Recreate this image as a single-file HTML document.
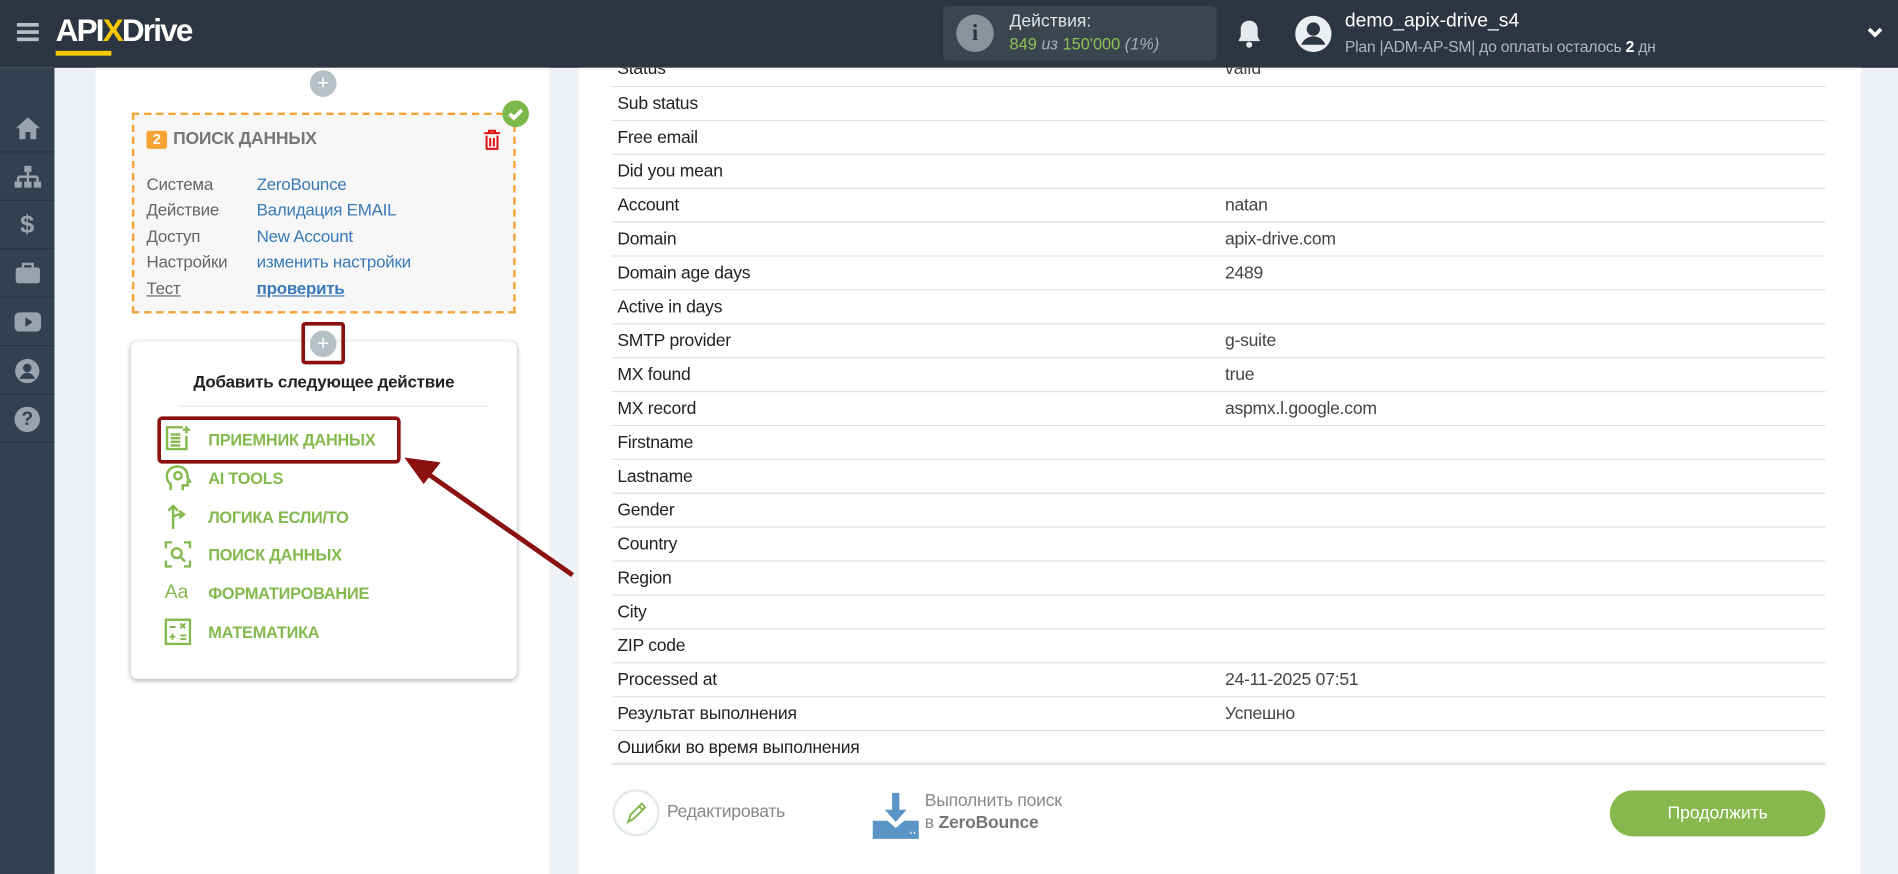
<!DOCTYPE html>
<html><head><meta charset="utf-8"><style>
*{box-sizing:border-box;margin:0;padding:0}
html,body{width:1898px;height:874px;overflow:hidden;background:#eef1f6}
#w{position:absolute;left:0;top:0;width:1568px;height:722px;transform:scale(1.21046);transform-origin:0 0;font-family:"Liberation Sans","Noto Sans CJK SC",sans-serif;background:#eef2f7}
.abs{position:absolute}
#hdr{left:0;top:0;width:1568px;height:56px;background:#2c3642}
#side{left:0;top:56px;width:45px;height:666px;background:#334050}
.si{position:absolute;left:0;width:45px;height:39px;border-bottom:1px solid #283340;display:flex;align-items:center;justify-content:center}
#lp{left:79px;top:56px;width:375px;height:666px;background:#fff}
#rp{left:478px;top:56px;width:1059px;height:666px;background:#fff}
.row{position:absolute;left:506px;width:1002px;height:28px;border-bottom:1px solid #e0e0e0;font-size:14.5px;letter-spacing:-0.2px;color:#222}
.row span{position:absolute;top:6px}
.row .v{left:506px;color:#444}
.plus{position:absolute;width:22px;height:22px;border-radius:50%;background:#b5c1c6;color:#fff;font-size:17px;line-height:21px;text-align:center}
.kv{position:absolute;font-size:14px;letter-spacing:-0.2px}
.k{left:121px;color:#666}
.vv{left:212px;color:#3a7ab8}
.mi{position:absolute;left:172px;font-size:13.5px;letter-spacing:-0.2px;font-weight:bold;color:#84b94e}
</style></head><body><div id="w">
<div id="hdr" class="abs">
 <div class="abs" style="left:14px;top:19px;width:18px;height:3px;background:#b8bec6;box-shadow:0 6px 0 #b8bec6,0 12px 0 #b8bec6"></div>
 <div class="abs" style="left:46px;top:10px;font-size:26px;font-weight:bold;color:#fff;letter-spacing:-1.5px">API<span style="color:#f5c800">X</span>Drive</div>
 <div class="abs" style="left:46px;top:42px;width:46px;height:4px;background:#f5c800"></div>
 <div class="abs" style="left:779px;top:5px;width:226px;height:45px;background:#3a4550;border-radius:4px"></div>
 <div class="abs" style="left:790px;top:12px;width:31px;height:31px;border-radius:50%;background:#8a939c;color:#2c3642;font-weight:bold;font-size:19px;text-align:center;line-height:31px;font-family:'Liberation Serif',serif">i</div>
 <div class="abs" style="left:834px;top:10px;font-size:14.5px;color:#dfe3e7">Действия:</div>
 <div class="abs" style="left:834px;top:29px;font-size:13.5px;color:#8cc152">849 <i style="color:#aab">из</i> 150'000 <i style="color:#aab">(1%)</i></div>
 <svg class="abs" style="left:1021px;top:15px" width="22" height="26" viewBox="0 0 22 26"><path d="M11 2c-4 0-7 3-7 7v6l-2 4h18l-2-4V9c0-4-3-7-7-7z" fill="#e6e9ec"/><circle cx="11" cy="22" r="2.5" fill="#e6e9ec"/></svg>
 <svg class="abs" style="left:1069px;top:12px" width="32" height="32" viewBox="0 0 32 32"><circle cx="16" cy="16" r="15" fill="#eceff2"/><circle cx="16" cy="12" r="5.5" fill="#2c3642"/><path d="M6 25c2-5 6-7 10-7s8 2 10 7" fill="#2c3642"/></svg>
 <div class="abs" style="left:1111px;top:9px;font-size:16px;color:#fff">demo_apix-drive_s4</div>
 <div class="abs" style="left:1111px;top:31px;font-size:13px;color:#aeb6bf;letter-spacing:-0.2px">Plan |ADM-AP-SM| до оплаты осталось <b style="color:#fff">2</b> дн</div>
 <svg class="abs" style="left:1542px;top:22px" width="14" height="10" viewBox="0 0 14 10"><path d="M2 2l5 5 5-5" stroke="#fff" stroke-width="3" fill="none"/></svg>
</div>
<div id="side" class="abs">
 <div class="si" style="top:31px"><svg width="22" height="20" viewBox="0 0 22 20"><path d="M11 1L1 10h3v9h5v-6h4v6h5v-9h3z" fill="#9aa3ad"/></svg></div>
 <div class="si" style="top:71px"><svg width="24" height="20" viewBox="0 0 24 20"><rect x="9" y="1" width="6" height="5" fill="#9aa3ad"/><path d="M12 6v4M4 10h16M4 10v4M12 10v4M20 10v4" stroke="#9aa3ad" stroke-width="2"/><rect x="1" y="14" width="6" height="5" fill="#9aa3ad"/><rect x="9" y="14" width="6" height="5" fill="#9aa3ad"/><rect x="17" y="14" width="6" height="5" fill="#9aa3ad"/></svg></div>
 <div class="si" style="top:111px;color:#9aa3ad;font-weight:bold;font-size:21px">$</div>
 <div class="si" style="top:151px"><svg width="22" height="18" viewBox="0 0 22 18"><rect x="1" y="4" width="20" height="13" rx="2" fill="#9aa3ad"/><rect x="7" y="1" width="8" height="4" fill="none" stroke="#9aa3ad" stroke-width="2"/></svg></div>
 <div class="si" style="top:191px"><svg width="22" height="16" viewBox="0 0 22 16"><rect x="0" y="0" width="22" height="16" rx="4" fill="#9aa3ad"/><path d="M9 4l6 4-6 4z" fill="#334050"/></svg></div>
 <div class="si" style="top:231px"><svg width="21" height="21" viewBox="0 0 21 21"><circle cx="10.5" cy="10.5" r="10" fill="#9aa3ad"/><circle cx="10.5" cy="8" r="3.5" fill="#334050"/><path d="M4 17c2-4 4-5 6.5-5s4.5 1 6.5 5" fill="#334050"/></svg></div>
 <div class="si" style="top:271px"><div style="width:21px;height:21px;border-radius:50%;background:#9aa3ad;color:#334050;font-weight:bold;font-size:16px;text-align:center;line-height:21px">?</div></div>
</div>
<div id="lp" class="abs"></div>
<div class="plus" style="left:256px;top:58px">+</div>
<div class="abs" style="left:109px;top:93px;width:317px;height:166px;background:#f7f7f7;border:2px dashed #f7a234"></div>
<div class="abs" style="left:415px;top:83px;width:22px;height:22px;border-radius:50%;background:#7cb94a"><svg width="22" height="22" viewBox="0 0 22 22"><path d="M6 11l3.5 3.5L16 8" stroke="#fff" stroke-width="3" fill="none"/></svg></div>
<div class="abs" style="left:121px;top:108px;width:17px;height:15px;background:#f7a234;color:#fff;font-size:12px;font-weight:bold;text-align:center;line-height:15px;border-radius:2px">2</div>
<div class="abs" style="left:143px;top:107px;font-size:14.5px;letter-spacing:-0.2px;font-weight:bold;color:#777">ПОИСК ДАННЫХ</div>
<svg class="abs" style="left:399px;top:107px" width="15" height="17" viewBox="0 0 15 17"><path d="M1 3h13M5 3V1h5v2M3 5v11h9V5M6 7v7M9 7v7" stroke="#d11" stroke-width="1.6" fill="none"/></svg>
<div class="kv k" style="top:144px">Система</div><div class="kv vv" style="top:144px">ZeroBounce</div>
<div class="kv k" style="top:165px">Действие</div><div class="kv vv" style="top:165px">Валидация EMAIL</div>
<div class="kv k" style="top:187px">Доступ</div><div class="kv vv" style="top:187px">New Account</div>
<div class="kv k" style="top:208px">Настройки</div><div class="kv vv" style="top:208px">изменить настройки</div>
<div class="kv k" style="top:230px;text-decoration:underline">Тест</div><div class="kv vv" style="top:230px;font-weight:bold;text-decoration:underline">проверить</div>
<div class="abs" style="left:108px;top:282px;width:319px;height:279px;background:#fff;border-radius:6px;box-shadow:0 1px 4px rgba(0,0,0,.35)"></div>
<div class="plus" style="left:256px;top:273px">+</div>
<div class="abs" style="left:249px;top:266px;width:36px;height:35px;border:3px solid #8b1010;border-radius:3px"></div>
<div class="abs" style="left:108px;top:307px;width:319px;text-align:center;font-size:14px;letter-spacing:-0.2px;font-weight:bold;color:#222">Добавить следующее действие</div>
<div class="abs" style="left:148px;top:335px;width:256px;height:1px;background:#e6e6e6"></div>
<div class="abs" style="left:130px;top:344px;width:201px;height:39px;border:3px solid #8b1010;border-radius:4px"></div>
<svg class="abs" style="left:136px;top:351px" width="22" height="22" viewBox="0 0 22 22"><path d="M15 2H2v18h16V9" stroke="#84b94e" stroke-width="2" fill="none"/><path d="M5 8h8M5 11h8M5 14h8M5 17h8M18 1v6M15 4h6" stroke="#84b94e" stroke-width="2"/></svg>
<div class="mi" style="top:356px">ПРИЕМНИК ДАННЫХ</div>
<svg class="abs" style="left:136px;top:383px" width="22" height="24" viewBox="0 0 22 24"><path d="M5 22v-5C1 14 1 8 4 5s9-4 13 0c2 2 2 5 2 7l2 3h-2v3h-4v4" stroke="#84b94e" stroke-width="2" fill="none"/><circle cx="11" cy="10" r="3" stroke="#84b94e" stroke-width="2" fill="none"/></svg>
<div class="mi" style="top:388px">AI TOOLS</div>
<svg class="abs" style="left:137px;top:416px" width="20" height="22" viewBox="0 0 20 22"><path d="M6 21V2M2 6l4-4 4 4M6 13c0-3 3-4 7-4M11 6l4 3-4 3" stroke="#84b94e" stroke-width="2" fill="none"/></svg>
<div class="mi" style="top:420px">ЛОГИКА ЕСЛИ/ТО</div>
<svg class="abs" style="left:136px;top:447px" width="22" height="22" viewBox="0 0 22 22"><path d="M1 6V1h5M16 1h5v5M21 16v5h-5M6 21H1v-5" stroke="#84b94e" stroke-width="2" fill="none"/><circle cx="10" cy="10" r="4" stroke="#84b94e" stroke-width="2" fill="none"/><path d="M13 13l4 4" stroke="#84b94e" stroke-width="2"/></svg>
<div class="mi" style="top:451px">ПОИСК ДАННЫХ</div>
<div class="abs" style="left:136px;top:481px;font-size:16px;color:#84b94e">Aa</div>
<div class="mi" style="top:483px">ФОРМАТИРОВАНИЕ</div>
<svg class="abs" style="left:136px;top:511px" width="22" height="22" viewBox="0 0 22 22"><rect x="1" y="1" width="20" height="20" stroke="#84b94e" stroke-width="2" fill="none"/><path d="M4 7h5M13 4l4 4M17 4l-4 4M4 15h5M6.5 12.5v5M13 14h5M13 17h5" stroke="#84b94e" stroke-width="1.6"/></svg>
<div class="mi" style="top:515px">МАТЕМАТИКА</div>
<svg class="abs" style="left:330px;top:375px" width="150" height="105" viewBox="0 0 150 105"><path d="M143 100L20 14" stroke="#8b1010" stroke-width="4"/><path d="M4 3l30 4-14 18z" fill="#8b1010"/></svg>
<div id="rp" class="abs"></div>
<div class="abs" style="left:506px;top:56px;width:1002px;height:15px;overflow:hidden"><div style="position:absolute;left:4px;top:-7px;font-size:14.5px;letter-spacing:-0.2px;color:#222">Status</div><div style="position:absolute;left:506px;top:-7px;font-size:14.5px;color:#444">valid</div></div>
<div class="abs" style="left:506px;top:71px;width:1002px;height:1px;background:#e0e0e0"></div>
<div class="row" style="top:72px"><span style="left:4px">Sub status</span></div>
<div class="row" style="top:100px"><span style="left:4px">Free email</span></div>
<div class="row" style="top:128px"><span style="left:4px">Did you mean</span></div>
<div class="row" style="top:156px"><span style="left:4px">Account</span><span class="v">natan</span></div>
<div class="row" style="top:184px"><span style="left:4px">Domain</span><span class="v">apix-drive.com</span></div>
<div class="row" style="top:212px"><span style="left:4px">Domain age days</span><span class="v">2489</span></div>
<div class="row" style="top:240px"><span style="left:4px">Active in days</span></div>
<div class="row" style="top:268px"><span style="left:4px">SMTP provider</span><span class="v">g-suite</span></div>
<div class="row" style="top:296px"><span style="left:4px">MX found</span><span class="v">true</span></div>
<div class="row" style="top:324px"><span style="left:4px">MX record</span><span class="v">aspmx.l.google.com</span></div>
<div class="row" style="top:352px"><span style="left:4px">Firstname</span></div>
<div class="row" style="top:380px"><span style="left:4px">Lastname</span></div>
<div class="row" style="top:408px"><span style="left:4px">Gender</span></div>
<div class="row" style="top:436px"><span style="left:4px">Country</span></div>
<div class="row" style="top:464px"><span style="left:4px">Region</span></div>
<div class="row" style="top:492px"><span style="left:4px">City</span></div>
<div class="row" style="top:520px"><span style="left:4px">ZIP code</span></div>
<div class="row" style="top:548px"><span style="left:4px">Processed at</span><span class="v">24-11-2025 07:51</span></div>
<div class="row" style="top:576px"><span style="left:4px">Результат выполнения</span><span class="v">Успешно</span></div>
<div class="row" style="top:604px;border-bottom:2px solid #e3e3e3"><span style="left:4px">Ошибки во время выполнения</span></div>
<div class="abs" style="left:506px;top:652px;width:39px;height:39px;border-radius:50%;border:2px solid #e3ebe6"><svg width="35" height="35" viewBox="0 0 35 35"><path d="M11 25l2-6 9-9 3 3-9 9zM20 12l3 3" stroke="#84b94e" stroke-width="1.6" fill="none"/></svg></div>
<div class="abs" style="left:551px;top:663px;font-size:14.5px;letter-spacing:-0.2px;color:#888">Редактировать</div>
<svg class="abs" style="left:720px;top:654px" width="40" height="40" viewBox="0 0 40 40"><path d="M17 1h6v14h6l-9 10-9-10h6z" fill="#5b95c8"/><path d="M1 24h12l7 6 7-6h12v15H1z" fill="#5b95c8"/><path d="M32 34h1M35 34h1" stroke="#fff" stroke-width="2"/></svg>
<div class="abs" style="left:764px;top:653px;font-size:14.5px;letter-spacing:-0.2px;color:#888;line-height:18px">Выполнить поиск<br>в <b style="color:#777">ZeroBounce</b></div>
<div class="abs" style="left:1330px;top:653px;width:178px;height:38px;border-radius:19px;background:#86b84e;color:#fff;font-size:14.5px;text-align:center;line-height:38px">Продолжить</div>
</div></body></html>
